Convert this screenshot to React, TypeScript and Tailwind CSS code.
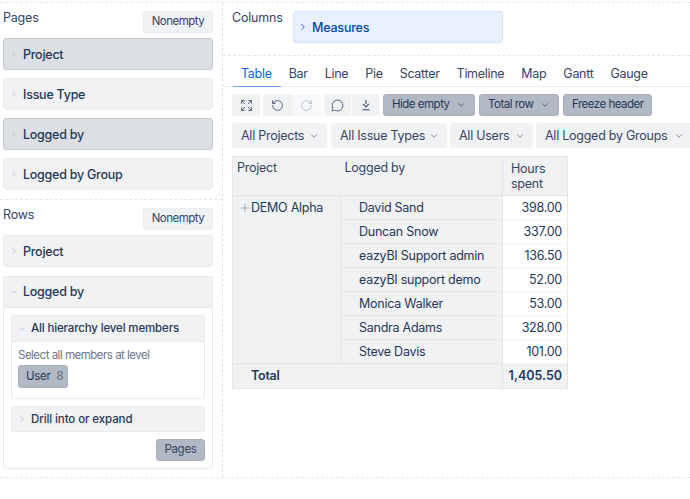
import { ChevronDown, ChevronRight, Expand, MessageCircle, Plus, RotateCcw, RotateCw } from "lucide-react";

const tabs = ["Table", "Bar", "Line", "Pie", "Scatter", "Timeline", "Map", "Gantt", "Gauge"];

const rows = [
  ["David Sand", "398.00"],
  ["Duncan Snow", "337.00"],
  ["eazyBI Support admin", "136.50"],
  ["eazyBI support demo", "52.00"],
  ["Monica Walker", "53.00"],
  ["Sandra Adams", "328.00"],
  ["Steve Davis", "101.00"],
];

function Dim({ label, active }: { label: string; active?: boolean }) {
  return (
    <div className={`h-[32px] flex items-center rounded-[3px] border ${active ? "bg-[#dcdfe4] border-[#c4c9d2]" : "bg-[#f1f2f4] border-[#e8eaee]"}`}>
      <ChevronRight className="w-[10px] h-[10px] ml-[5px] mr-[4px] text-[#a5adba]" strokeWidth={1.5} />
      <span className="pt-[2px] text-[12.5px] tracking-[-0.25px] font-medium text-[#253858]">{label}</span>
    </div>
  );
}

function Nonempty() {
  return (
    <button className="w-[70px] h-[22px] rounded-[3px] bg-[#f1f2f4] border border-[#ebecf0] text-[11.5px] tracking-[-0.5px] text-[#344563]">Nonempty</button>
  );
}

function Filter({ label, w }: { label: string; w: string }) {
  return (
    <div className={`${w} h-[25px] shrink-0 flex items-center justify-between pl-[9px] pr-[8px] rounded-[3px] bg-[#f1f2f4] text-[12.5px] tracking-[-0.25px] text-[#344563]`}>
      <span className="pt-px whitespace-nowrap">{label}</span>
      <ChevronDown className="w-[10px] h-[10px] text-[#5e6c84]" strokeWidth={1.75} />
    </div>
  );
}

function Toggle({ label, w, menu }: { label: string; w: string; menu?: boolean }) {
  return (
    <div className={`${w} ml-px h-[22px] flex items-center justify-between pl-[8px] pr-[8px] rounded-[3px] bg-[#b3b9c4] border border-[#a9b0bc] text-[11.5px] tracking-[-0.5px] text-[#253858]`}>
      <span className="whitespace-nowrap">{label}</span>
      {menu && <ChevronDown className="w-[10px] h-[10px] text-[#344563]" strokeWidth={1.75} />}
    </div>
  );
}

export default function App() {
  return (
    <div className="w-[690px] h-[499px] overflow-hidden bg-white pt-[2px] font-['Inter',sans-serif] text-[#253858]">
      <div className="flex h-[476px] border-t border-b border-dashed border-[#e4e6ea]">
        {/* left panel */}
        <div className="w-[223px] shrink-0 border-r border-dashed border-[#dfe1e6]">
          <div className="pl-[3px] pr-[9px] pt-[8px] h-[197px] border-b border-dashed border-[#e4e6ea]">
            <div className="flex justify-between h-[22px] mb-[5px]">
              <span className="text-[12.5px] tracking-[-0.2px] text-[#344563] mt-[-2px]">Pages</span>
              <Nonempty />
            </div>
            <div className="flex flex-col gap-[8px]">
              <Dim label="Project" active />
              <Dim label="Issue Type" />
              <Dim label="Logged by" active />
              <Dim label="Logged by Group" />
            </div>
          </div>
          <div className="pl-[3px] pr-[9px] pt-[8px]">
            <div className="flex justify-between h-[22px] mb-[5px]">
              <span className="text-[12.5px] tracking-[-0.2px] text-[#344563] mt-[-2px]">Rows</span>
              <Nonempty />
            </div>
            <Dim label="Project" />
            <div className="mt-[9px] h-[193px] rounded-[3px] border border-[#e8eaee]">
              <div className="h-[31px] flex items-center bg-[#f1f2f4] border-b border-[#e8eaee]">
                <ChevronDown className="w-[10px] h-[10px] ml-[5px] mr-[4px] text-[#a5adba]" strokeWidth={1.5} />
                <span className="pt-px text-[12.5px] tracking-[-0.25px] font-medium">Logged by</span>
              </div>
              <div className="pt-[7px] pl-[7px] pr-[7px]">
                <div className="h-[84px] rounded-[3px] border border-[#e8eaee]">
                  <div className="h-[26px] flex items-center bg-[#f1f2f4] border-b border-[#e8eaee]">
                    <ChevronDown className="w-[10px] h-[10px] ml-[5px] mr-[4px] text-[#a5adba]" strokeWidth={1.5} />
                    <span className="text-[11.5px] tracking-[-0.15px] font-medium">All hierarchy level members</span>
                  </div>
                  <div className="pl-[6px] pt-[6px]">
                    <div className="text-[11.5px] tracking-[-0.5px] leading-[14px] text-[#6b778c]">Select all members at level</div>
                    <div className="mt-[3px] w-[50px] h-[23px] flex items-center pl-[7px] gap-[6px] rounded-[3px] bg-[#b3b9c4] border border-[#a9b0bc] text-[11.5px] tracking-[-0.3px]">
                      <span>User</span>
                      <span className="text-[#5e6c84]">8</span>
                    </div>
                  </div>
                </div>
                <div className="mt-[7px] h-[26px] flex items-center rounded-[3px] bg-[#f1f2f4] border border-[#e8eaee]">
                  <ChevronRight className="w-[10px] h-[10px] ml-[5px] mr-[4px] text-[#a5adba]" strokeWidth={1.5} />
                  <span className="pt-px text-[11.5px] tracking-[-0.1px] font-medium">Drill into or expand</span>
                </div>
                <div className="flex justify-end mt-[7px]">
                  <div className="w-[49px] h-[22px] flex items-center justify-center rounded-[3px] bg-[#b3b9c4] border border-[#a9b0bc] text-[11.5px] tracking-[-0.3px] text-[#344563]">Pages</div>
                </div>
              </div>
            </div>
          </div>
        </div>

        {/* right panel */}
        <div className="flex-1 min-w-0">
          <div className="h-[53px] pl-[9px] pt-[8px] flex gap-[9px] border-b border-dashed border-[#e4e6ea]">
            <span className="w-[52px] text-[12.5px] tracking-[-0.2px] text-[#344563] mt-[-2px]">Columns</span>
            <div className="w-[210px] h-[32px] flex items-center rounded-[3px] bg-[#e6f0ff] border border-[#d3e3fc]">
              <ChevronRight className="w-[10px] h-[10px] ml-[4px] mr-[4px] text-[#0b50c4]" strokeWidth={2} />
              <span className="pt-[2px] text-[12.5px] tracking-[-0.2px] font-medium text-[#0747a6]">Measures</span>
            </div>
          </div>

          <div className="pl-[18px] mt-[10px] flex gap-[17px] h-[21px] border-b border-[#ebecf0] text-[12.5px] tracking-[-0.3px] text-[#344563]">
            {tabs.map((t, i) => (
              <div
                key={t}
                className={`relative h-[21px] leading-[15px] ${i === 0 ? "text-[#0c66e4]" : ""}`}
              >
                {t}
                {i === 0 && <div className="absolute left-[-8px] right-[-9px] bottom-0 h-[1.5px] bg-[#6ea3ee]" />}
              </div>
            ))}
          </div>

          <div className="pl-[9px] mt-[7px] flex gap-[3px] text-[#344563]">
            <div className="w-[28px] h-[22px] flex items-center justify-center rounded-[3px] bg-[#f1f2f4]">
              <Expand className="w-[13px] h-[13px]" strokeWidth={1.5} />
            </div>
            <div className="flex w-[58px] h-[22px] rounded-[3px] overflow-hidden">
              <div className="w-[29px] flex items-center justify-center bg-[#f1f2f4]">
                <RotateCcw className="w-[13px] h-[13px]" strokeWidth={1.5} />
              </div>
              <div className="w-[29px] flex items-center justify-center bg-[#f7f8f9] text-[#b3b9c4]">
                <RotateCw className="w-[13px] h-[13px]" strokeWidth={1.5} />
              </div>
            </div>
            <div className="flex w-[55px] h-[22px] rounded-[3px] overflow-hidden gap-px">
              <div className="flex-1 flex items-center justify-center bg-[#f1f2f4]">
                <MessageCircle className="w-[13px] h-[13px]" strokeWidth={1.5} />
              </div>
              <div className="flex-1 flex items-center justify-center bg-[#f1f2f4]">
                <svg viewBox="0 0 12 12" className="w-[12px] h-[12px]" fill="none" stroke="currentColor" strokeWidth={1.1}>
                  <path d="M2.5 10.8h7" />
                  <path d="M6 1v4M3.2 4.8 6 8l2.8-3.2" />
                </svg>
              </div>
            </div>
            <Toggle label="Hide empty" w="w-[92px]" menu />
            <Toggle label="Total row" w="w-[80px]" menu />
            <Toggle label="Freeze header" w="w-[89px]" />
          </div>

          <div className="pl-[9px] mt-[7px] flex gap-[3px]">
            <Filter label="All Projects" w="w-[95px] mr-px" />
            <Filter label="All Issue Types" w="w-[116px]" />
            <Filter label="All Users" w="w-[83px]" />
            <Filter label="All Logged by Groups" w="w-[156px]" />
          </div>

          <div className="pl-[9px] mt-[8px]">
            <table className="w-[335px] table-fixed border-collapse text-[12.5px] tracking-[-0.25px] text-[#253858]">
              <colgroup>
                <col className="w-[108px]" />
                <col className="w-[162px]" />
                <col className="w-[65px]" />
              </colgroup>
              <tbody>
                <tr className="h-[39px]">
                  <td className="align-top pl-[4px] pt-[2px] bg-[#f1f2f4] border border-[#e4e6ea] border-r-0 text-[#344563]">Project</td>
                  <td className="align-top pl-[4px] pt-[2px] bg-[#f1f2f4] border-y border-[#e4e6ea] text-[#344563]">Logged by</td>
                  <td className="pl-[8px] leading-[15px] bg-[#f1f2f4] border border-[#e4e6ea] text-[#344563]">Hours spent</td>
                </tr>
                {rows.map(([name, value], i) => (
                  <tr key={name} className="h-[24px]">
                    {i === 0 && (
                      <td rowSpan={7} className="align-top bg-[#f1f2f4] border border-[#e4e6ea] pt-[3px]">
                        <div className="flex items-center pl-[5px]">
                          <Plus className="w-[14px] h-[14px] -mr-px text-[#7a869a]" strokeWidth={1} />
                          <span>DEMO Alpha</span>
                        </div>
                      </td>
                    )}
                    <td className="pl-[18px] pt-px bg-[#f1f2f4] border border-[#e4e6ea]">{name}</td>
                    <td className="pr-[5px] pt-px text-right bg-white border border-[#f4f5f7] border-l-[#e4e6ea] border-r-[#e4e6ea]">{value}</td>
                  </tr>
                ))}
                <tr className="h-[25px]">
                  <td colSpan={2} className="pl-[18px] bg-[#f1f2f4] border border-[#e4e6ea] font-semibold">Total</td>
                  <td className="pr-[5px] text-right tracking-[0px] bg-[#f1f2f4] border border-[#e4e6ea] font-semibold">1,405.50</td>
                </tr>
              </tbody>
            </table>
          </div>
        </div>
      </div>
    </div>
  );
}
